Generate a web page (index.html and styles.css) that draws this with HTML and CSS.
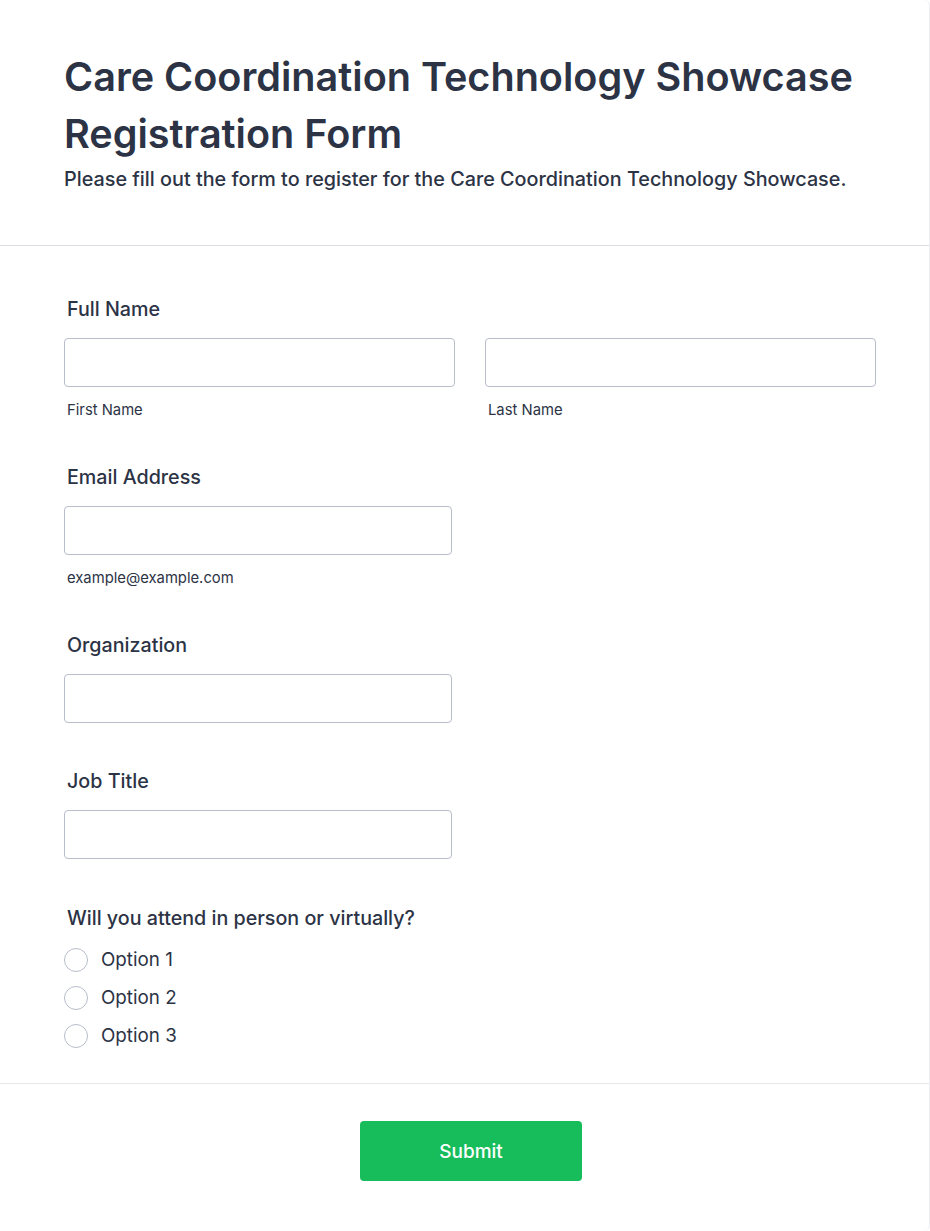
FILE: index.html
```html
<!DOCTYPE html>
<html lang="en">
<head>
<meta charset="utf-8">
<title>Care Coordination Technology Showcase Registration Form</title>
<link rel="stylesheet" href="styles.css">
</head>
<body>
<div class="card">
  <header class="header">
    <h1 class="title">Care Coordination Technology Showcase Registration Form</h1>
    <p class="subtitle">Please fill out the form to register for the Care Coordination Technology Showcase.</p>
  </header>
  <form class="form">
    <div class="field">
      <label class="label">Full Name</label>
      <div class="name-row">
        <div class="name-col">
          <input class="input" type="text">
          <span class="sublabel">First Name</span>
        </div>
        <div class="name-col">
          <input class="input" type="text">
          <span class="sublabel">Last Name</span>
        </div>
      </div>
    </div>
    <div class="field">
      <label class="label">Email Address</label>
      <input class="input input-single" type="email">
      <span class="sublabel">example@example.com</span>
    </div>
    <div class="field">
      <label class="label">Organization</label>
      <input class="input input-single" type="text">
    </div>
    <div class="field">
      <label class="label">Job Title</label>
      <input class="input input-single" type="text">
    </div>
    <div class="field field-last">
      <label class="label">Will you attend in person or virtually?</label>
      <div class="radios">
        <label class="radio"><span class="circle"></span><span>Option 1</span></label>
        <label class="radio"><span class="circle"></span><span>Option 2</span></label>
        <label class="radio"><span class="circle"></span><span>Option 3</span></label>
      </div>
    </div>
  </form>
  <footer class="footer">
    <button class="submit" type="button">Submit</button>
  </footer>
</div>
</body>
</html>
```
FILE: styles.css
```css
* { box-sizing: border-box; }
html, body { margin: 0; padding: 0; background: #fff; }
body {
  font-family: Inter, "Noto Sans", "Liberation Sans", sans-serif;
  color: #2c3345;
}
.card {
  width: 930px;
  min-height: 1231px;
  border-right: 1px solid #eceef3;
  border-radius: 0 6px 6px 0;
  display: flex;
  flex-direction: column;
}
.header {
  padding: 49px 64px 52px 64px;
  border-bottom: 1px solid #dcdee3;
}
.title {
  margin: 0;
  font-size: 39.6px;
  line-height: 57px;
  font-weight: 600;
  color: #2c3345;
}
.subtitle {
  margin: 3px 0 0 0;
  font-size: 19.8px;
  line-height: 27px;
  font-weight: 500;
  color: #2c3345;
}
.form {
  padding: 48px 64px 35px 64px;
  border-bottom: 1px solid #e6e8ec;
}
.field {
  display: flex;
  flex-direction: column;
  align-items: flex-start;
  padding-bottom: 43px;
}
.field-last { padding-bottom: 0; margin-top: 1px; }
.label {
  font-size: 19.7px;
  line-height: 28px;
  font-weight: 500;
  padding-left: 3px;
  margin-top: 1px;
  margin-bottom: 15px;
}
.name-row {
  display: flex;
  gap: 30px;
}
.name-col {
  display: flex;
  flex-direction: column;
  width: 391px;
}
.input {
  display: block;
  width: 100%;
  height: 49px;
  border: 1px solid #b8bdc9;
  border-radius: 4px;
  background: #fff;
  margin: 0;
  font: inherit;
}
.input-single { width: 388px; }
.sublabel {
  margin-top: 15px;
  padding-left: 3px;
  font-size: 14.8px;
  line-height: 17px;
  color: #2c3345;
}
.radios {
  display: flex;
  flex-direction: column;
  gap: 14px;
  margin-top: 1px;
}
.radio {
  display: flex;
  align-items: center;
  gap: 13px;
  font-size: 18.8px;
  line-height: 24px;
}
.circle {
  width: 24px;
  height: 24px;
  border: 1px solid #b8bdc9;
  border-radius: 50%;
  background: #fff;
}
.footer {
  flex: 1;
  display: flex;
  justify-content: center;
  align-items: flex-start;
  padding: 37px 0 0 13px;
}
.submit {
  width: 222px;
  height: 60px;
  background: #18bd5b;
  color: #fff;
  border: none;
  border-radius: 4px;
  font-family: Inter, "Noto Sans", sans-serif;
  font-size: 19px;
  font-weight: 500;
}
```
